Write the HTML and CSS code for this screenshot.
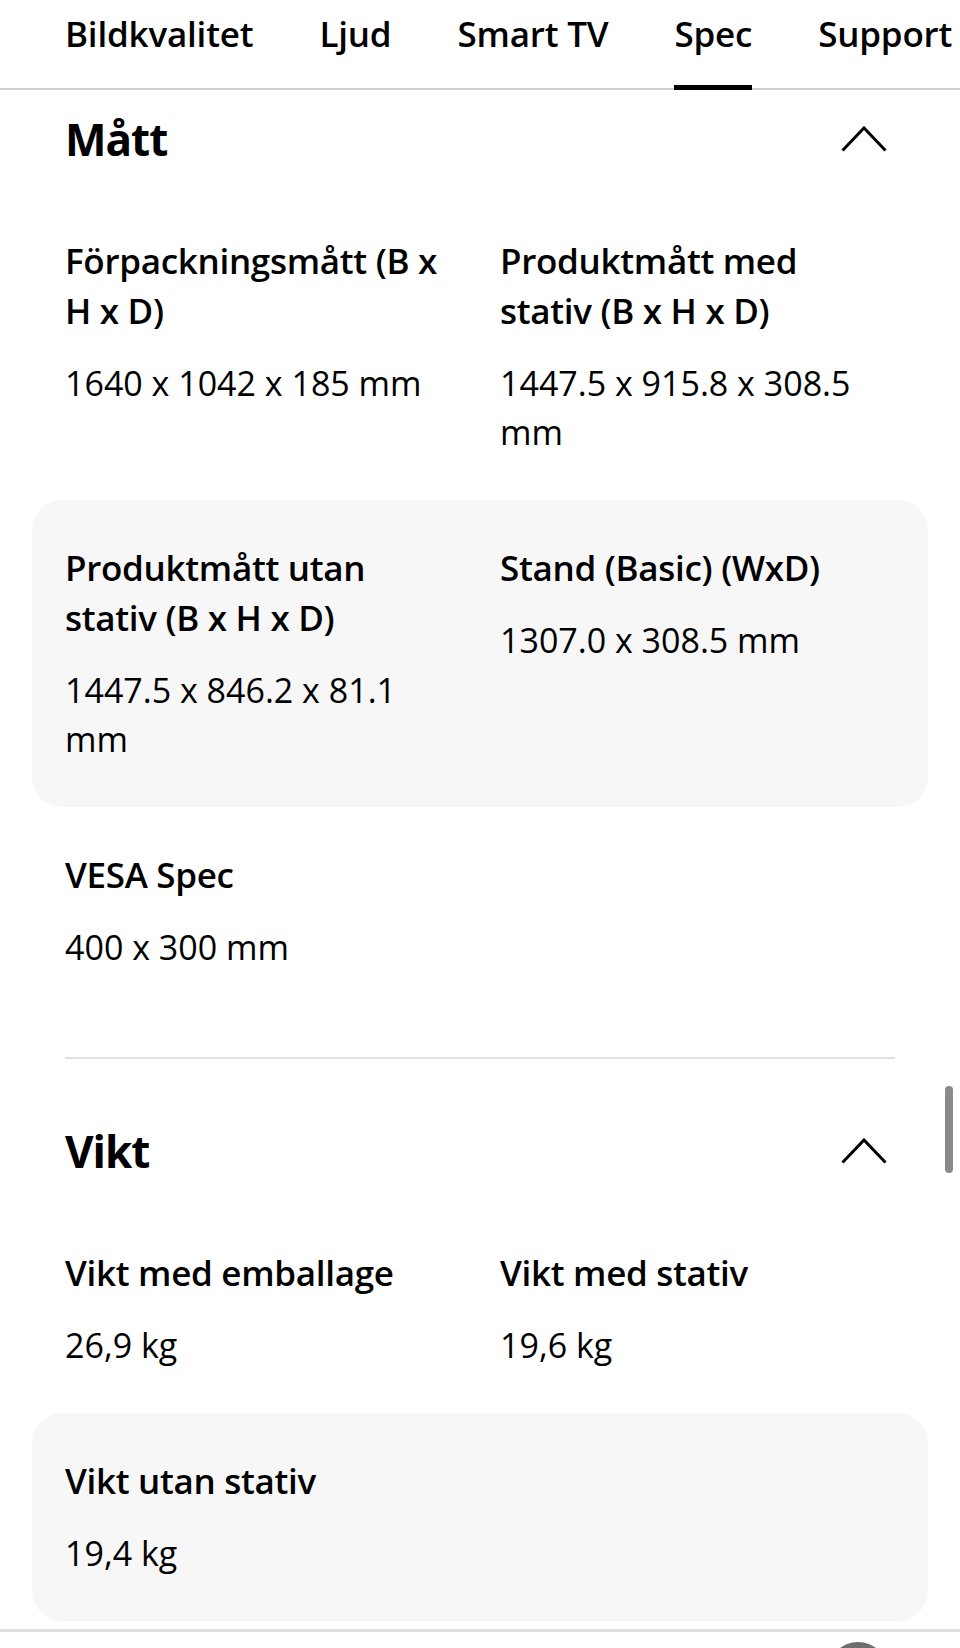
FILE: index.html
```html
<!DOCTYPE html>
<html lang="sv">
<head>
<meta charset="utf-8">
<title>Spec</title>
<link rel="stylesheet" href="styles.css">
</head>
<body>
<nav class="tabs">
  <a class="tab">Bildkvalitet</a>
  <a class="tab">Ljud</a>
  <a class="tab">Smart TV</a>
  <a class="tab is-active">Spec</a>
  <a class="tab">Support</a>
</nav>
<main class="specs">
  <section class="spec spec--scrolled">
    <div class="spec-head">
      <h2 class="spec-title">Mått</h2>
      <svg class="chevron" width="46" height="26" viewBox="0 0 46 26"><polyline points="1.5,24.5 23,2 44.5,24.5" fill="none" stroke="#000" stroke-width="3"/></svg>
    </div>
    <div class="spec-row">
      <div class="spec-item"><div class="spec-label">Förpackningsmått (B x H x D)</div><div class="spec-value">1640 x 1042 x 185 mm</div></div>
      <div class="spec-item"><div class="spec-label">Produktmått med stativ (B x H x D)</div><div class="spec-value">1447.5 x 915.8 x 308.5 mm</div></div>
    </div>
    <div class="spec-row spec-row--alt">
      <div class="spec-item"><div class="spec-label">Produktmått utan stativ (B x H x D)</div><div class="spec-value">1447.5 x 846.2 x 81.1 mm</div></div>
      <div class="spec-item"><div class="spec-label">Stand (Basic) (WxD)</div><div class="spec-value">1307.0 x 308.5 mm</div></div>
    </div>
    <div class="spec-row">
      <div class="spec-item"><div class="spec-label">VESA Spec</div><div class="spec-value">400 x 300 mm</div></div>
    </div>
  </section>
  <hr class="spec-divider">
  <section class="spec">
    <div class="spec-head">
      <h2 class="spec-title">Vikt</h2>
      <svg class="chevron" width="46" height="26" viewBox="0 0 46 26"><polyline points="1.5,24.5 23,2 44.5,24.5" fill="none" stroke="#000" stroke-width="3"/></svg>
    </div>
    <div class="spec-row">
      <div class="spec-item"><div class="spec-label">Vikt med emballage</div><div class="spec-value">26,9 kg</div></div>
      <div class="spec-item"><div class="spec-label">Vikt med stativ</div><div class="spec-value">19,6 kg</div></div>
    </div>
    <div class="spec-row spec-row--alt">
      <div class="spec-item"><div class="spec-label">Vikt utan stativ</div><div class="spec-value">19,4 kg</div></div>
    </div>
  </section>
</main>
<div class="page-rule"></div>
<div class="scroll-thumb"></div>
<div class="fab"></div>
</body>
</html>
```
FILE: styles.css
```css
* { box-sizing: border-box; }
html, body { margin: 0; padding: 0; background: #fff; }
body {
  font-family: "Open Sans", "Noto Sans", sans-serif;
  color: #000;
  position: relative;
  min-height: 1648px;
  overflow: hidden;
}
.tabs {
  display: flex;
  gap: 66px;
  padding-left: 65px;
  height: 90px;
  border-bottom: 2px solid #cfcfcf;
  white-space: nowrap;
}
.tab {
  position: relative;
  font-size: 35px;
  font-weight: 600;
  line-height: 48px;
  padding-top: 10px;
  letter-spacing: -0.2px;
  flex: none;
}
.tab.is-active::after {
  content: "";
  position: absolute;
  left: 0;
  right: 0;
  bottom: -2px;
  height: 5px;
  background: #000;
}
.specs { padding: 0 32px; }
.spec-head {
  display: flex;
  align-items: center;
  justify-content: space-between;
  padding: 62px 33px 0;
  margin-bottom: 24px;
}
.spec--scrolled .spec-head { padding-top: 19px; }
.spec-title {
  margin: 0;
  font-size: 44px;
  line-height: 60px;
  font-weight: 700;
  letter-spacing: -1px;
}
.chevron { margin-right: 8px; display: block; }
.spec-row {
  display: grid;
  grid-template-columns: 375px 395px;
  column-gap: 60px;
  padding: 43px 33px;
  border-radius: 30px;
}
.spec-row--alt { background: #f7f7f7; }
.spec-label {
  font-size: 35px;
  line-height: 50px;
  font-weight: 600;
  letter-spacing: -0.3px;
}
.spec-value {
  margin-top: 23px;
  font-size: 34px;
  line-height: 49px;
  font-weight: 400;
  letter-spacing: 0;
}
.spec-divider {
  margin: 42px 33px 0;
  border: 0;
  height: 2px;
  background: #e2e2e2;
}
.page-rule {
  margin-top: 8px;
  height: 3px;
  background: #e0e0e0;
}
.scroll-thumb {
  position: absolute;
  left: 945px;
  top: 1086px;
  width: 8px;
  height: 87px;
  border-radius: 4px;
  background: #8a8a8a;
}
.fab {
  position: absolute;
  left: 828px;
  top: 1642px;
  width: 60px;
  height: 60px;
  border-radius: 50%;
  background: #6f6f6f;
}
```
